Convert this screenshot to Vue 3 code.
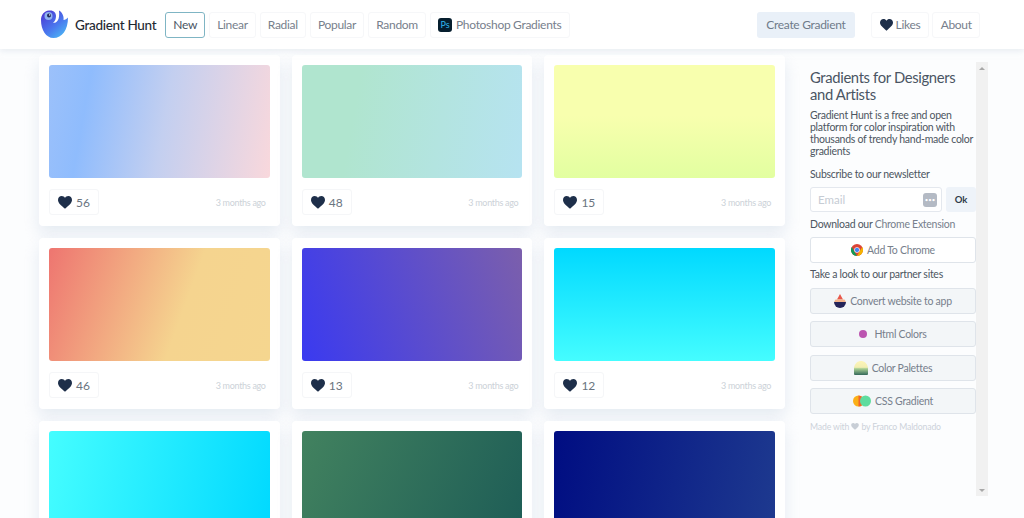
<script setup>
const nav = ['Linear', 'Radial', 'Popular', 'Random']
const cards = [
  { id: 1, likes: 56, bg: 'linear-gradient(100deg,#9cc1fa 0%,#8fbcfd 18%,#c3cff0 52%,#f9d8dc 100%)' },
  { id: 2, likes: 48, bg: 'linear-gradient(100deg,#b0e5cf 0%,#b0e5cf 25%,#b6e3f1 100%)' },
  { id: 3, likes: 15, bg: 'linear-gradient(180deg,#f8ffae 0%,#f8ffae 45%,#e2ffa0 100%)' },
  { id: 4, likes: 46, bg: 'linear-gradient(110deg,#ee7570 0%,#f5d48f 60%,#f5d68f 100%)' },
  { id: 5, likes: 13, bg: 'linear-gradient(70deg,#3a3af0 0%,#7b5fac 100%)' },
  { id: 6, likes: 12, bg: 'linear-gradient(180deg,#00d9ff 0%,#45fdff 100%)' },
  { id: 7, bg: 'linear-gradient(100deg,#45fdff 0%,#00d9ff 100%)' },
  { id: 8, bg: 'linear-gradient(115deg,#42825f 0%,#1d5c56 100%)' },
  { id: 9, bg: 'linear-gradient(100deg,#000d82 0%,#1e3a8f 100%)' },
]
</script>

<template>
  <div class="page">
    <header class="header">
      <div class="brand">
        <svg class="logo" viewBox="0 0 28 28" width="28" height="28">
          <defs>
            <linearGradient id="lg" x1="0.1" y1="0" x2="0.9" y2="1">
              <stop offset="0" stop-color="#4d37d2" />
              <stop offset=".55" stop-color="#4a78ee" />
              <stop offset="1" stop-color="#4cc0f5" />
            </linearGradient>
          </defs>
          <path fill="url(#lg)" d="M1 10C1 5 4 1 9 .500 14 0 16 3 16 6c0 3-1 5-3 7 4 0 7-3 6-12.500 3.500 2 5 6 4.500 9.500 2 0 3-1 4.500-2.500C28 20 22 28 13.500 28 6 28 1 20 1 10z" />
          <circle cx="8.500" cy="6" r="4" fill="#8fb2f0" />
          <circle cx="9" cy="5.500" r="2" fill="#1f2a5a" />
          <circle cx="9.600" cy="4.900" r=".7" fill="#fff" />
        </svg>
        <span class="brand-name">Gradient Hunt</span>
      </div>
      <nav class="nav">
        <a class="btn active">New</a>
        <a v-for="n in nav" :key="n" class="btn">{{ n }}</a>
        <a class="btn ps-btn">
          <span class="ps">Ps</span>
          Photoshop Gradients
        </a>
      </nav>
      <div class="right">
        <a class="create">Create Gradient</a>
        <div class="right-links">
          <a class="btn likes">
            <svg class="heart" viewBox="0 0 24 22" width="13" height="12"><path d="M12 21.5C5 15.500 0 11.500 0 6.500 0 2.800 2.800 0 6.400 0 8.800 0 10.900 1.200 12 3.200 13.100 1.200 15.200 0 17.600 0 21.200 0 24 2.800 24 6.500c0 5-5 9-12 15z" /></svg>
            Likes
          </a>
          <a class="btn">About</a>
        </div>
      </div>
    </header>

    <div class="body">
      <main class="grid">
        <article v-for="c in cards" :key="c.id" class="card">
          <div class="swatch" :style="{ background: c.bg }"></div>
          <div v-if="c.likes" class="card-foot">
            <button class="like">
              <svg class="heart" viewBox="0 0 24 22" width="14" height="13"><path d="M12 21.5C5 15.500 0 11.500 0 6.500 0 2.800 2.800 0 6.400 0 8.800 0 10.900 1.200 12 3.200 13.100 1.200 15.200 0 17.600 0 21.200 0 24 2.800 24 6.500c0 5-5 9-12 15z" /></svg>
              <span>{{ c.likes }}</span>
            </button>
            <span class="time">3 months ago</span>
          </div>
        </article>
      </main>

      <aside class="side">
        <h2>Gradients for Designers and Artists</h2>
        <p class="intro">Gradient Hunt is a free and open platform for color inspiration with thousands of trendy hand-made color gradients</p>
        <p class="label sub">Subscribe to our newsletter</p>
        <div class="form">
          <div class="input">
            <span>Email</span>
            <span class="dots">•••</span>
          </div>
          <button class="ok">Ok</button>
        </div>
        <p class="label dl">Download our <span class="link">Chrome Extension</span></p>
        <a class="side-btn white">
          <svg viewBox="0 0 24 24" width="12" height="12">
            <circle cx="12" cy="12" r="12" fill="#db4437" />
            <path d="M12 24A12 12 0 0 1 1.600 6l6 10.500L12 24z" fill="#0f9d58" />
            <path d="M12 24l6-10.500L22.400 6A12 12 0 0 1 12 24z" fill="#f4b400" />
            <circle cx="12" cy="12" r="5.500" fill="#fff" />
            <circle cx="12" cy="12" r="4.300" fill="#4285f4" />
          </svg>
          Add To Chrome
        </a>
        <p class="label partner">Take a look to our partner sites</p>
        <a class="side-btn">
          <svg viewBox="0 0 12 14" width="12" height="14">
            <path d="M6 0l3 5.500H3z" fill="#e8574a" />
            <path d="M1.500 5.500h9L12 8H0z" fill="#f4b48c" />
            <path d="M0 8h12a6 6 0 0 1-12 0z" fill="#25255a" />
          </svg>
          Convert website to app
        </a>
        <a class="side-btn">
          <span class="dot"></span>
          Html Colors
        </a>
        <a class="side-btn">
          <svg viewBox="0 0 14 14" width="14" height="14">
            <defs>
              <linearGradient id="pal" x1="0" y1="0" x2="0" y2="1">
                <stop offset="0" stop-color="#fdf5b8" />
                <stop offset=".45" stop-color="#f2eeb2" />
                <stop offset=".55" stop-color="#a9cf93" />
                <stop offset="1" stop-color="#33685a" />
              </linearGradient>
            </defs>
            <path d="M0 6.500C1 2 4 0 7 0s6 2 7 6.500V13a1 1 0 0 1-1 1H1a1 1 0 0 1-1-1z" fill="url(#pal)" />
          </svg>
          Color Palettes
        </a>
        <a class="side-btn">
          <svg viewBox="0 0 18 12" width="18" height="12">
            <circle cx="5.500" cy="6" r="5.500" fill="#fbb017" />
            <path d="M5.500.5a5.500 5.500 0 0 1 0 11z" fill="#f0642e" />
            <circle cx="12.500" cy="6" r="5.500" fill="#5fdc9e" />
          </svg>
          CSS Gradient
        </a>
        <p class="made">Made with <svg viewBox="0 0 24 22" width="8" height="7"><path fill="#c8ced6" d="M12 21.500C5 15.500 0 11.500 0 6.500 0 2.800 2.800 0 6.400 0 8.800 0 10.900 1.200 12 3.200 13.100 1.200 15.200 0 17.600 0 21.200 0 24 2.800 24 6.500c0 5-5 9-12 15z" /></svg> by Franco Maldonado</p>
      </aside>

      <div class="scroll">
        <i class="up"></i>
        <i class="down"></i>
      </div>
    </div>
  </div>
</template>

<style>
html, body { margin: 0; background: #fcfdfe; }
</style>

<style scoped>
.page {
  width: 1024px;
  height: 518px;
  overflow: hidden;
  font-family: Lato, "Liberation Sans", sans-serif;
  color: #4a5568;
}
.header {
  position: relative;
  z-index: 2;
  height: 49px;
  display: flex;
  align-items: center;
  background: #fff;
  box-shadow: 0 2px 6px rgba(215, 222, 232, .55);
  padding-left: 40px;
  box-sizing: border-box;
}
.brand { display: flex; align-items: center; gap: 7px; width: 125px; }
.logo { flex: none; margin-top: -2px; }
.brand-name { font-size: 13.500px; font-weight: 500; color: #1f2933; white-space: nowrap; letter-spacing: -.3px; }
.nav { display: flex; gap: 3.600px; align-items: center; }
.btn {
  display: flex;
  align-items: center;
  height: 26px;
  box-sizing: border-box;
  padding: 0 7.250px;
  border: 1px solid #f6f7f9;
  border-radius: 3px;
  font-size: 12px;
  letter-spacing: -.3px;
  color: #77808c;
  white-space: nowrap;
}
.active { border-color: #7fb5c4; color: #4a5563; }
.ps-btn { gap: 4px; }
.ps {
  width: 14px;
  height: 14px;
  border-radius: 3px;
  background: #061e2e;
  color: #2fb6f0;
  font-size: 9px;
  letter-spacing: 0;
  display: flex;
  align-items: center;
  justify-content: center;
}
.right { margin-left: auto; margin-right: 44px; display: flex; align-items: center; gap: 16px; }
.create {
  height: 26px;
  display: flex;
  align-items: center;
  padding: 0 9px;
  border-radius: 3px;
  background: #e9f0f8;
  font-size: 12px;
  letter-spacing: -.3px;
  color: #6f7b8a;
  white-space: nowrap;
}
.right-links { display: flex; gap: 3px; }
.likes { gap: 3px; padding: 0 8px; }
.heart { fill: #1e2f4a; flex: none; }
.body { display: flex; height: 469px; }
.grid {
  width: 747px;
  margin-left: 39px;
  padding-top: 6px;
  display: grid;
  grid-template-columns: repeat(3, 240.700px);
  grid-auto-rows: 171px;
  gap: 12px;
  flex: none;
}
.card {
  background: #fff;
  border-radius: 4px;
  padding: 10px;
  box-sizing: border-box;
  box-shadow: 0 8px 16px rgba(215, 223, 235, .6);
}
.swatch { height: 113px; border-radius: 3px; }
.card-foot { display: flex; align-items: center; justify-content: space-between; padding: 11px 4px 0 0; }
.like {
  display: flex;
  align-items: center;
  gap: 4px;
  width: 50px;
  height: 26px;
  box-sizing: border-box;
  padding: 0 0 0 8px;
  background: #fff;
  border: 1px solid #f5f6f8;
  border-radius: 3px;
  font: 12px Lato, sans-serif;
  color: #6a7480;
}
.time { font-size: 9px; letter-spacing: -.3px; color: #ccd2d8; }
.side { width: 166px; margin-left: 24px; flex: none; padding-top: 20px; font-size: 10.500px; letter-spacing: -.27px; color: #4d5661; }
h2 { margin: 0 0 6px; font-size: 14.800px; line-height: 17px; font-weight: 400; letter-spacing: -.35px; color: #4a5563; }
p { margin: 0; }
.intro { line-height: 12px; width: 166px; }
.label { line-height: 12px; }
.sub { margin-top: 11px; }
.form { display: flex; gap: 4px; margin-top: 7px; }
.input {
  width: 132px;
  height: 25px;
  box-sizing: border-box;
  border: 1px solid #e4e8ee;
  border-radius: 3px;
  display: flex;
  align-items: center;
  justify-content: space-between;
  padding: 0 4px 0 7px;
  font-size: 11.500px;
  letter-spacing: 0;
  color: #c6ccd4;
  background: #fff;
}
.dots {
  width: 14px;
  height: 14px;
  border-radius: 3px;
  background: #b4bac4;
  color: #fff;
  font-size: 6px;
  display: flex;
  align-items: center;
  justify-content: center;
}
.ok {
  width: 30px;
  height: 25px;
  padding: 0;
  border: 0;
  border-radius: 3px;
  background: #eef3f9;
  font: 700 9.500px Lato, sans-serif;
  color: #2f3b4a;
}
.dl { margin-top: 6px; }
.link { color: #77808c; }
.side-btn {
  display: flex;
  align-items: center;
  justify-content: center;
  gap: 4px;
  height: 26px;
  box-sizing: border-box;
  margin-top: 7.500px;
  border: 1px solid #dfe4ea;
  border-radius: 3px;
  background: #f3f6f8;
  color: #77808c;
}
.white { background: #fff; margin-top: 7px; }
.partner { margin-top: 5px; }
.dot { width: 8px; height: 8px; border-radius: 50%; background: #bb55b0; margin-right: 3px; }
.made { margin-top: 7px; font-size: 8.700px; letter-spacing: -.15px; color: #ccd2da; line-height: 11px; }
.scroll {
  width: 12px;
  height: 434px;
  margin-top: 13px;
  background: #f1f1f1;
  position: relative;
  flex: none;
}
.up, .down { position: absolute; left: 3px; width: 0; height: 0; border-left: 3px solid transparent; border-right: 3px solid transparent; }
.up { top: 5px; border-bottom: 3px solid #a8a8a8; }
.down { bottom: 4px; border-top: 3px solid #a8a8a8; }
</style>
